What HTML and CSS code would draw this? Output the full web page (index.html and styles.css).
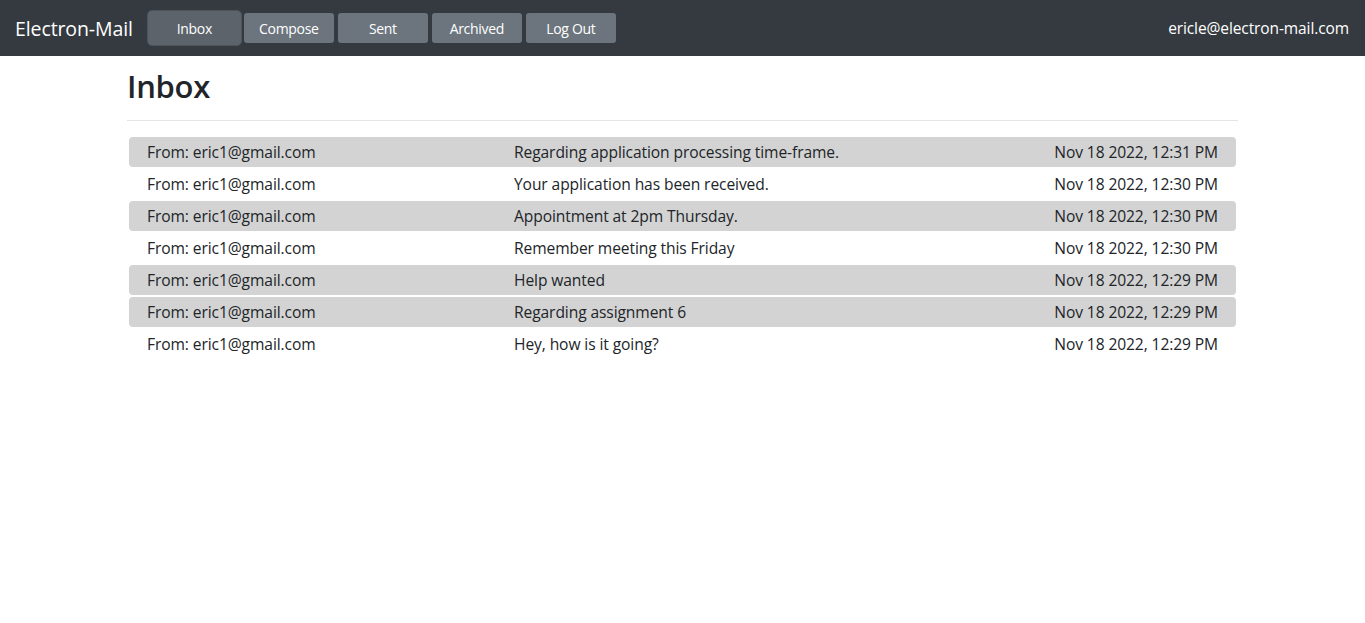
FILE: index.html
```html
<!DOCTYPE html>
<html>
<head>
<meta charset="utf-8">
<link rel="stylesheet" href="styles.css">
</head>
<body>
<nav class="navbar">
  <div class="nav-left">
    <span class="brand">Electron-Mail</span>
    <div class="nav-buttons">
      <button class="btn active">Inbox</button>
      <button class="btn">Compose</button>
      <button class="btn">Sent</button>
      <button class="btn">Archived</button>
      <button class="btn">Log Out</button>
    </div>
  </div>
  <span class="user">ericle@electron-mail.com</span>
</nav>
<main class="container">
  <h1 class="title">Inbox</h1>
  <hr class="divider">
  <div class="mail-list">
    <div class="mail unread"><span class="from">From: eric1@gmail.com</span><span class="subject">Regarding application processing time-frame.</span><span class="date">Nov 18 2022, 12:31 PM</span></div>
    <div class="mail"><span class="from">From: eric1@gmail.com</span><span class="subject">Your application has been received.</span><span class="date">Nov 18 2022, 12:30 PM</span></div>
    <div class="mail unread"><span class="from">From: eric1@gmail.com</span><span class="subject">Appointment at 2pm Thursday.</span><span class="date">Nov 18 2022, 12:30 PM</span></div>
    <div class="mail"><span class="from">From: eric1@gmail.com</span><span class="subject">Remember meeting this Friday</span><span class="date">Nov 18 2022, 12:30 PM</span></div>
    <div class="mail unread"><span class="from">From: eric1@gmail.com</span><span class="subject">Help wanted</span><span class="date">Nov 18 2022, 12:29 PM</span></div>
    <div class="mail unread"><span class="from">From: eric1@gmail.com</span><span class="subject">Regarding assignment 6</span><span class="date">Nov 18 2022, 12:29 PM</span></div>
    <div class="mail"><span class="from">From: eric1@gmail.com</span><span class="subject">Hey, how is it going?</span><span class="date">Nov 18 2022, 12:29 PM</span></div>
  </div>
</main>
</body>
</html>
```
FILE: styles.css
```css
* { box-sizing: border-box; }
body {
  margin: 0;
  font-family: "Open Sans", "Noto Sans", sans-serif;
  color: #212529;
  background: #fff;
}
.navbar {
  height: 56px;
  background: #343a40;
  display: flex;
  align-items: center;
  justify-content: space-between;
  padding: 0 16px 0 15px;
}
.nav-left {
  display: flex;
  align-items: center;
}
.brand {
  color: #fff;
  font-size: 19.5px;
  margin-right: 14px;
  letter-spacing: -0.1px;
}
.nav-buttons {
  display: flex;
  align-items: center;
}
.btn {
  font-family: "Open Sans", "Noto Sans", sans-serif;
  width: 90px;
  height: 30px;
  margin-right: 4px;
  background: #6c757d;
  color: #fff;
  border: none;
  border-radius: 3px;
  font-size: 14px;
  letter-spacing: -0.3px;
  padding: 0;
}
.btn.active {
  width: 95px;
  height: 36px;
  background: #5c636a;
  border: 1px solid #4d5359;
  border-radius: 5px;
  margin-right: 2px;
}
.user {
  color: #fff;
  font-size: 15.5px;
  letter-spacing: -0.1px;
}
.container {
  width: 1111px;
  margin: 0 auto;
}
.title {
  margin: 10px 0 0;
  font-size: 31px;
  font-weight: 600;
  line-height: 1.3;
  letter-spacing: -0.3px;
}
.divider {
  margin: 14px 0 16px;
  border: 0;
  border-top: 1px solid #e3e4e6;
}
.mail-list {
  display: flex;
  flex-direction: column;
  gap: 2px;
  padding: 0 2px;
}
.mail {
  height: 30px;
  display: grid;
  grid-template-columns: 367px 1fr auto;
  align-items: center;
  padding: 0 18px;
  border-radius: 4px;
  font-size: 15.6px;
  letter-spacing: -0.1px;
}
.mail.unread {
  background: #d3d3d3;
}
```
